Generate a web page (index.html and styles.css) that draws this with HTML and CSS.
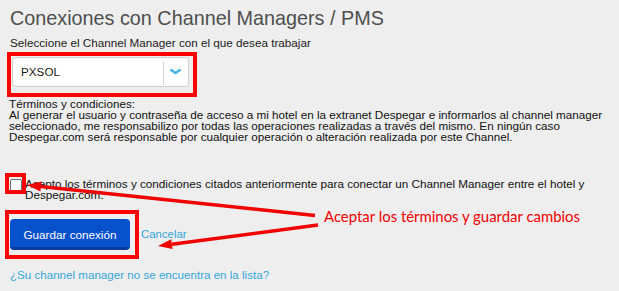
FILE: index.html
```html
<!DOCTYPE html>
<html lang="es">
<head>
<meta charset="utf-8">
<title>Conexiones con Channel Managers / PMS</title>
<link rel="stylesheet" href="styles.css">
</head>
<body>
<div class="page">
  <h1 class="title">Conexiones con Channel Managers / PMS</h1>
  <p class="label">Seleccione el Channel Manager con el que desea trabajar</p>
  <div class="mark mark-select">
    <div class="select">
      <span class="select-value">PXSOL</span>
      <span class="select-divider"></span>
      <svg class="select-chevron" width="13" height="7" viewBox="0 0 13 7"><polyline points="1.5,1.5 6.5,5 11.5,1.5" fill="none" stroke="#45b3ee" stroke-width="2.6" stroke-linejoin="miter"/></svg>
    </div>
  </div>
  <div class="terms">
    <p>Términos y condiciones:</p>
    <p>Al generar el usuario y contraseña de acceso a mi hotel en la extranet Despegar e informarlos al channel manager seleccionado, me responsabilizo por todas las operaciones realizadas a través del mismo. En ningún caso Despegar.com será responsable por cualquier operación o alteración realizada por este Channel.</p>
  </div>
  <label class="accept">
    <span class="check-wrap"><input type="checkbox" class="check"></span>
    <span class="accept-text">Acepto los términos y condiciones citados anteriormente para conectar un Channel Manager entre el hotel y Despegar.com.</span>
  </label>
  <div class="actions">
    <div class="mark mark-button">
      <button class="btn-primary">Guardar conexión</button>
    </div>
    <a class="link cancel" href="#">Cancelar</a>
  </div>
  <a class="link missing" href="#">¿Su channel manager no se encuentra en la lista?</a>
</div>
<svg class="annotation" width="619" height="291" viewBox="0 0 619 291">
  <line x1="315" y1="215.5" x2="40.9" y2="186.5" stroke="#f20000" stroke-width="3.5"/>
  <polygon points="27,185 41.4,181.5 40.4,191.4" fill="#f20000"/>
  <line x1="318" y1="225" x2="171.9" y2="244.2" stroke="#f20000" stroke-width="3.5"/>
  <polygon points="158,246 171.2,239.2 172.5,249.1" fill="#f20000"/>
  <text x="324" y="221.7" class="annotation-text" textLength="256" lengthAdjust="spacingAndGlyphs">Aceptar los términos y guardar cambios</text>
</svg>
</body>
</html>
```

FILE: styles.css
```css
html, body {
  margin: 0;
  padding: 0;
}
body {
  background: #eeeeee;
  width: 619px;
  height: 291px;
  overflow: hidden;
  position: relative;
  font-family: "Liberation Sans", Arial, sans-serif;
  color: #111;
}
.page {
  padding: 6px 8px 0 9px;
}
.title {
  margin: 0 0 0 1px;
  font-size: 19.8px;
  line-height: 24px;
  font-weight: normal;
  color: #4f4f4f;
}
.label {
  margin: 5.5px 0 0 1px;
  font-size: 11.7px;
  line-height: 14px;
  color: #222;
}
.mark {
  border: 4px solid #ff0000;
  box-sizing: border-box;
}
.mark-select {
  width: 190px;
  margin: 2.4px 0 0 -2px;
  padding: 1px 4px 6px 1px;
}
.select {
  height: 30px;
  box-sizing: border-box;
  background: #fff;
  border: 1px solid #cfcfcf;
  border-radius: 4px;
  display: flex;
  align-items: center;
}
.select-value {
  flex: 1;
  padding-left: 8px;
  font-size: 11.7px;
  color: #1a1a1a;
}
.select-divider {
  width: 1px;
  height: 23px;
  margin-top: 3px;
  background: #d4d4d4;
}
.select-chevron {
  margin: 0 6px 0 5px;
}
.terms {
  margin-top: 0.8px;
  font-size: 11.7px;
  line-height: 11px;
  color: #111;
}
.terms p {
  margin: 0;
}
.accept {
  display: flex;
  align-items: flex-start;
  margin-top: 37.8px;
  font-size: 11.7px;
  line-height: 10.8px;
  color: #111;
}
.check-wrap {
  position: relative;
  margin: -0.8px 3px 0 1px;
  width: 12px;
  height: 12px;
  flex: none;
}
.check-wrap::after {
  content: "";
  position: absolute;
  left: -5px;
  top: -6px;
  right: -4px;
  bottom: -3px;
  border: 4px solid #ff0000;
}
.check {
  appearance: none;
  -webkit-appearance: none;
  margin: 0;
  width: 12px;
  height: 12px;
  box-sizing: border-box;
  border: 1px solid #6f6f6f;
  border-radius: 2px;
  background: #fff;
  display: block;
}
.actions {
  display: flex;
  align-items: center;
  margin-top: 8.7px;
  margin-left: -4px;
}
.mark-button {
  padding: 5px 5px 5px 1px;
}
.btn-primary {
  display: block;
  width: 120px;
  height: 31px;
  box-sizing: border-box;
  padding: 4px 0 0;
  margin: 0;
  border: 0;
  border-bottom: 3px solid #0a3c9c;
  border-radius: 4px;
  background: #0751cc;
  color: #fff;
  font-family: "Liberation Sans", Arial, sans-serif;
  font-size: 11.7px;
  line-height: 24px;
  text-align: center;
}
.link {
  color: #33a6dc;
  text-decoration: none;
}
.cancel {
  margin-left: 2px;
  font-size: 11.4px;
}
.missing {
  display: block;
  margin-top: 9.4px;
  margin-left: 1px;
  font-size: 11.6px;
  line-height: 13px;
}
.annotation {
  position: absolute;
  left: 0;
  top: 0;
  pointer-events: none;
}
.annotation-text {
  font-family: Lato, "Open Sans", sans-serif;
  font-size: 15px;
  fill: #f20000;
}
```
